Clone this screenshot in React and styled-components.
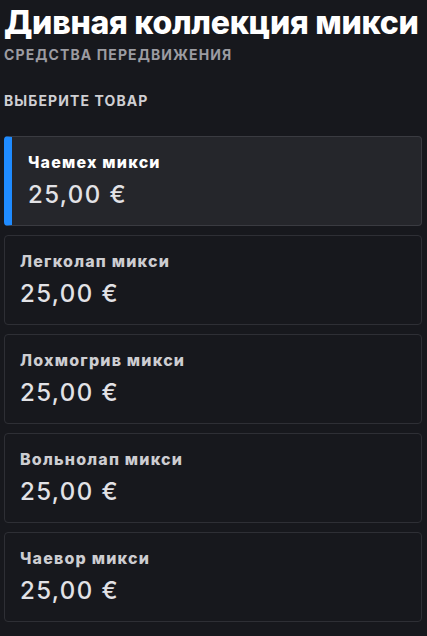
import React from "react";
import styled, { createGlobalStyle } from "styled-components";

const Global = createGlobalStyle`
  html, body { margin: 0; padding: 0; background: #17181d; }
  body { font-family: Inter, "Noto Sans", sans-serif; }
`;

const Page = styled.div`
  width: 427px;
  min-height: 636px;
  box-sizing: border-box;
  padding: 3px 5px 0 4px;
  background: #17181d;
  display: flex;
  flex-direction: column;
`;

const Title = styled.h1`
  margin: 0;
  font-size: 32px;
  line-height: 40px;
  font-weight: 800;
  color: #ffffff;
  letter-spacing: -0.3px;
`;

const Subtitle = styled.div`
  margin-top: 3px;
  font-size: 14px;
  line-height: 17px;
  font-weight: 700;
  letter-spacing: 1.1px;
  color: #9c9ca2;
`;

const SectionLabel = styled.div`
  margin-top: 29px;
  font-size: 14px;
  line-height: 17px;
  font-weight: 700;
  letter-spacing: 1.1px;
  color: #cfcfd3;
`;

const List = styled.div`
  margin-top: 27px;
  display: flex;
  flex-direction: column;
  gap: 9px;
`;

const Card = styled.div`
  box-sizing: border-box;
  height: 90px;
  border-radius: 4px;
  border: 1px solid ${(p) => (p.$selected ? "#3a3b41" : "#2e2f35")};
  border-left: ${(p) => (p.$selected ? "8px solid #1f8bff" : "1px solid #2e2f35")};
  background: ${(p) => (p.$selected ? "#25262b" : "#17181d")};
  padding: 15px 0 0 ${(p) => (p.$selected ? "16px" : "15px")};
  display: flex;
  flex-direction: column;
`;

const Name = styled.div`
  font-size: 16px;
  line-height: 20px;
  font-weight: 800;
  letter-spacing: 1.2px;
  color: ${(p) => (p.$selected ? "#ffffff" : "#cdcdd1")};
`;

const Price = styled.div`
  margin-top: 8px;
  font-size: 24px;
  line-height: 29px;
  font-weight: 500;
  letter-spacing: 1.4px;
  color: #e2e2e6;
`;

const items = [
  "Чаемех микси",
  "Легколап микси",
  "Лохмогрив микси",
  "Вольнолап микси",
  "Чаевор микси",
];

export default function App() {
  return (
    <Page>
      <Global />
      <Title>Дивная коллекция микси</Title>
      <Subtitle>СРЕДСТВА ПЕРЕДВИЖЕНИЯ</Subtitle>
      <SectionLabel>ВЫБЕРИТЕ ТОВАР</SectionLabel>
      <List>
        {items.map((n, i) => (
          <Card key={n} $selected={i === 0}>
            <Name $selected={i === 0}>{n}</Name>
            <Price>25,00 €</Price>
          </Card>
        ))}
      </List>
    </Page>
  );
}
